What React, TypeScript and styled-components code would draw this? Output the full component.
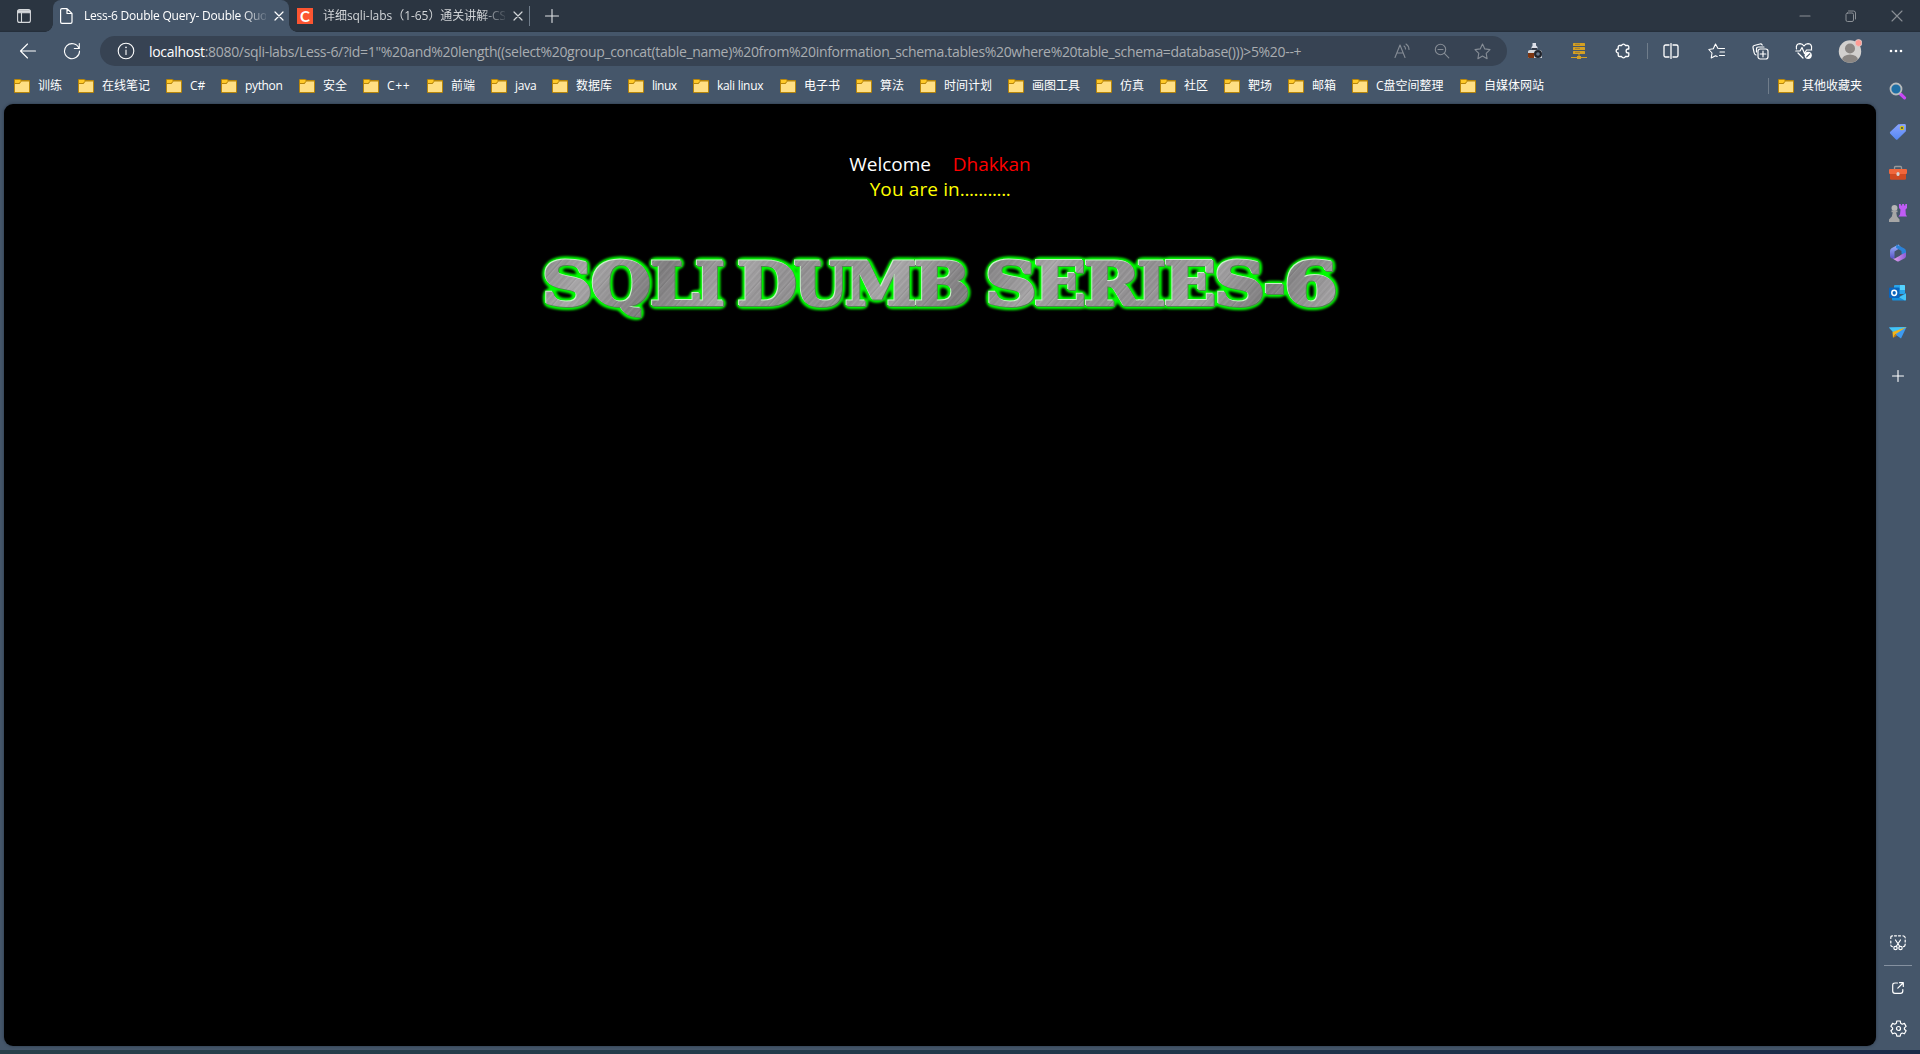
import React from "react";
import styled, { createGlobalStyle } from "styled-components";

const latin = `"Open Sans", "Noto Sans CJK SC", sans-serif`;

const Global = createGlobalStyle`
  * { box-sizing: border-box; }
  html, body { margin: 0; padding: 0; background: #45566a; overflow: hidden; }
  body { font-family: ${latin}; }
  svg { display: block; flex: none; }
`;

const Window = styled.div`
  width: 1920px;
  height: 1054px;
  display: flex;
  flex-direction: column;
  background: #45566a;
`;

const TabBar = styled.header`
  display: flex;
  align-items: center;
  height: 32px;
  flex: none;
  background: linear-gradient(#2b3541 0, #2b3541 30px, #232d39 32px);
`;

const Slot = styled.div<{ $w: number }>`
  width: ${(p) => p.$w}px;
  height: 100%;
  flex: none;
  display: flex;
  align-items: center;
  justify-content: center;
`;

const Tab = styled.div<{ $active?: boolean; $w: number }>`
  position: relative;
  width: ${(p) => p.$w}px;
  height: 32px;
  flex: none;
  display: flex;
  align-items: center;
  padding-left: ${(p) => (p.$active ? 5 : 8)}px;
  background: ${(p) => (p.$active ? "#45566a" : "transparent")};
  border-radius: 8px 8px 0 0;
  color: ${(p) => (p.$active ? "#ffffff" : "#d2d5d8")};
  &::before, &::after {
    content: "";
    display: ${(p) => (p.$active ? "block" : "none")};
    position: absolute;
    bottom: 0;
    width: 8px;
    height: 8px;
  }
  &::before { left: -8px; background: radial-gradient(circle at 0 0, transparent 7.5px, #45566a 8px); }
  &::after { right: -8px; background: radial-gradient(circle at 100% 0, transparent 7.5px, #45566a 8px); }
`;

const TabTitle = styled.div<{ $w: number; $ls: number }>`
  width: ${(p) => p.$w}px;
  margin-left: 10px;
  font-size: 12px;
  line-height: 18px;
  letter-spacing: ${(p) => p.$ls}px;
  white-space: nowrap;
  overflow: hidden;
  mask-image: linear-gradient(90deg, #000 calc(100% - 24px), transparent 102%);
`;

const Favicon = styled.div`
  width: 16px;
  height: 16px;
  flex: none;
  background: #fc5531;
  color: #fff;
  font: 700 15px/16px Lato, sans-serif;
  text-align: center;
`;

const CloseSlot = styled.div`
  width: 16px;
  margin-left: 5px;
  display: flex;
  justify-content: center;
`;

const Rule = styled.div<{ $h: number; $ml?: number }>`
  width: 1px;
  height: ${(p) => p.$h}px;
  margin-left: ${(p) => p.$ml ?? 0}px;
  flex: none;
  background: #707d8b;
`;

const Spacer = styled.div`
  flex: 1;
`;

const Toolbar = styled.div`
  display: flex;
  align-items: center;
  height: 38px;
  flex: none;
  padding-left: 6px;
`;

const Address = styled.div`
  width: 1407px;
  height: 30px;
  margin: 0 6px;
  display: flex;
  align-items: center;
  flex: none;
  border-radius: 15px;
  background: #374353;
  padding: 0 5px 0 6px;
`;

const Url = styled.div`
  margin-left: 3px;
  padding-top: 1px;
  font-size: 14px;
  line-height: 20px;
  letter-spacing: -0.32px;
  color: #a9adb1;
  white-space: nowrap;
  flex: 1;
`;

const Host = styled.span`
  color: #ffffff;
`;

const Body = styled.div`
  display: flex;
  height: 980px;
  flex: none;
`;

const Main = styled.div`
  width: 1876px;
  display: flex;
  flex-direction: column;
`;

const Bookmarks = styled.nav`
  display: flex;
  align-items: center;
  height: 34px;
  flex: none;
  padding-left: 14px;
  padding-bottom: 2px;
`;

const Bookmark = styled.div`
  display: flex;
  align-items: center;
  margin-right: 16px;
  &:last-child { margin-right: 14px; }
`;

const BookmarkLabel = styled.span<{ $w: number; $ls: number }>`
  width: ${(p) => p.$w}px;
  margin-left: 8px;
  font-size: 12px;
  line-height: 18px;
  letter-spacing: ${(p) => p.$ls}px;
  color: #ffffff;
  white-space: nowrap;
`;

const Page = styled.main`
  width: 1872px;
  height: 942px;
  margin-left: 4px;
  flex: none;
  display: flex;
  flex-direction: column;
  align-items: center;
  border-radius: 9px;
  background: #000;
  box-shadow: 0 0 3px rgba(20, 28, 40, 0.55);
  padding-top: 48px;
`;

const Line = styled.div<{ $c: string; $ls: number; $gap?: number }>`
  display: flex;
  justify-content: center;
  gap: ${(p) => p.$gap ?? 0}px;
  height: 25px;
  font-size: 19px;
  line-height: 25px;
  letter-spacing: ${(p) => p.$ls}px;
  color: ${(p) => p.$c};
  white-space: nowrap;
`;

const Red = styled.span`
  color: #ff0000;
`;

const Dots = styled.span`
  letter-spacing: -0.4px;
`;

const Banner = styled.div`
  margin-top: 43px;
`;

const Sidebar = styled.aside`
  width: 44px;
  display: flex;
  flex-direction: column;
  align-items: center;
  padding: 1px 0 3px;
`;

const SideSlot = styled.div<{ $h?: number }>`
  width: 44px;
  height: ${(p) => p.$h ?? 40}px;
  flex: none;
  display: flex;
  align-items: center;
  justify-content: center;
`;

const SideRule = styled.div`
  width: 28px;
  height: 1px;
  flex: none;
  background: #8591a0;
`;

const Desktop = styled.div`
  height: 4px;
  background: linear-gradient(90deg, #28404a 0%, #223a4a 45%, #1b2a48 100%);
`;

type IconProps = { s?: number; c?: string; w?: number; children: React.ReactNode };
const Icon = ({ s = 16, c = "#fff", w = 1.1, children }: IconProps) => (
  <svg width={s} height={s} viewBox={`0 0 ${s} ${s}`} fill="none" stroke={c} strokeWidth={w} strokeLinecap="round" strokeLinejoin="round">
    {children}
  </svg>
);

const Close = ({ c = "#fff" }) => (
  <Icon s={10} c={c} w={1.2}><path d="M1 1l8 8M9 1L1 9" /></Icon>
);

const Folder = () => (
  <svg width="16" height="14" viewBox="0 0 16 14">
    <path d="M0 1a1 1 0 0 1 1-1h5l2 1h7a1 1 0 0 1 1 1v11a1 1 0 0 1-1 1H1a1 1 0 0 1-1-1z" fill="#b8860b" />
    <path d="M1 1h5l1 1-2 2H1z" fill="#ffc929" />
    <path d="M1 5h4.500l2-2.500H15V13H1z" fill="#ffdf84" />
  </svg>
);

const marks: [string, number, number][] = [
  ["训练", 24, 0], ["在线笔记", 48, 0], ["C#", 15, -0.1], ["python", 38, -0.35], ["安全", 24, 0],
  ["C++", 24, 0.7], ["前端", 24, 0], ["java", 21, -0.2], ["数据库", 36, 0], ["linux", 25, -0.5],
  ["kali linux", 47, -0.3], ["电子书", 36, 0], ["算法", 24, 0], ["时间计划", 48, 0], ["画图工具", 48, 0],
  ["仿真", 24, 0], ["社区", 24, 0], ["靶场", 24, 0], ["邮箱", 24, 0], ["C盘空间整理", 68, 0], ["自媒体网站", 60, 0],
];

const Mark = ({ label, w, ls }: { label: string; w: number; ls: number }) => (
  <Bookmark>
    <Folder />
    <BookmarkLabel $w={w} $ls={ls}>{label}</BookmarkLabel>
  </Bookmark>
);

/* Left edge and width of every banner glyph, in banner units. */
const glyphs: [string, number, number][] = [
  ["S", 16, 51], ["Q", 65, 60], ["L", 124, 50], ["I", 169, 30],
  ["D", 211, 60], ["U", 268, 54], ["M", 319, 72], ["B", 388, 56],
  ["S", 459, 52], ["E", 508, 52], ["R", 558, 56], ["I", 611, 29],
  ["E", 638, 52], ["S", 688, 51], ["-", 738, 21], ["6", 758, 54],
];

/* Offset and tone of the streaks of the brushed metal. */
const streaks: [number, string][] = [
  [1, "#9f9d9f"], [3, "#8f8d8f"], [6, "#a3a1a3"], [8, "#918f91"], [11, "#9f9d9f"],
  [13, "#8b898b"], [14, "#a5a3a5"], [18, "#8f8d8f"], [20, "#a19fa1"],
];

const BannerArt = () => (
  <svg width="828" height="92" viewBox="0 0 828 92">
    <defs>
      <pattern id="brush" width="23" height="200" patternUnits="userSpaceOnUse" patternTransform="rotate(42)">
        <rect width="23" height="200" fill="#979597" />
        {streaks.map(([x, fill]) => <rect key={x} x={x} width="1.200" height="200" fill={fill} />)}
      </pattern>
      <linearGradient id="sheen" x1="0" y1="0" x2="110" y2="70" gradientUnits="userSpaceOnUse" spreadMethod="reflect">
        <stop offset="0" stopColor="#000" stopOpacity="0.02" />
        <stop offset="0.5" stopColor="#fff" stopOpacity="0.16" />
        <stop offset="1" stopColor="#000" stopOpacity="0.16" />
      </linearGradient>
      <pattern id="metal" width="828" height="92" patternUnits="userSpaceOnUse">
        <rect width="828" height="92" fill="url(#brush)" />
        <rect width="828" height="92" fill="url(#sheen)" />
      </pattern>
      <filter id="neon" x="0" y="0" width="828" height="92" filterUnits="userSpaceOnUse" colorInterpolationFilters="sRGB">
        <feGaussianBlur in="SourceAlpha" stdDeviation="2.400" />
        <feComponentTransfer><feFuncA type="linear" slope="14" intercept="-0.900" /></feComponentTransfer>
        <feGaussianBlur stdDeviation="1.100" result="halo" />
        <feFlood floodColor="#00fc00" /><feComposite in2="halo" operator="in" result="green" />
        <feOffset in="SourceAlpha" dx="-0.700" dy="-0.700" result="up" />
        <feFlood floodColor="#c8f0c8" /><feComposite in2="up" operator="in" result="light" />
        <feOffset in="SourceAlpha" dx="0.500" dy="0.500" result="down" />
        <feFlood floodColor="#4a8a4a" /><feComposite in2="down" operator="in" result="dark" />
        <feMerge>
          <feMergeNode in="green" /><feMergeNode in="dark" /><feMergeNode in="light" /><feMergeNode in="SourceGraphic" />
        </feMerge>
      </filter>
    </defs>
    <text y="59.500" fontFamily="DejaVu Serif, serif" fontWeight="700" fontSize="59" fill="url(#metal)" stroke="url(#metal)" strokeWidth="2" filter="url(#neon)">
      {glyphs.map(([g, x, w], i) => (
        <tspan key={i} x={x} textLength={w} lengthAdjust="spacingAndGlyphs">{g}</tspan>
      ))}
    </text>
  </svg>
);

const TabMenuIcon = () => (
  <Icon s={14} c="#d5d8db"><rect x=".6" y=".6" width="12.800" height="12.800" rx="2" /><path d="M4.500 4v9" /><path d="M1 1.700h12v2H1z" fill="#d5d8db" /></Icon>
);
const FileIcon = () => (
  <Icon s={16} w={1.2}><path d="M4 .6h5L14 5.500V14a1.400 1.400 0 0 1-1.400 1.400H4A1.400 1.400 0 0 1 2.600 14V2A1.400 1.400 0 0 1 4 .6zM9 .8v4.700h4.800" /></Icon>
);
const HostInfo = () => (
  <Icon s={18}><circle cx="9" cy="9" r="7.800" /><path d="M9 8v4.500" /><path d="M9 5.300v.2" strokeWidth="1.600" /></Icon>
);

const Search = () => (
  <svg width="18" height="18" viewBox="0 0 18 18">
    <path d="M11.500 12l4 3.800" stroke="#c748f5" strokeWidth="3.200" strokeLinecap="round" />
    <circle cx="7" cy="7" r="5.500" fill="#1f6fa5" stroke="#b9bcbd" strokeWidth="1.800" />
  </svg>
);
const Tag = () => (
  <svg width="18" height="18" viewBox="0 0 18 18">
    <defs><linearGradient id="tg" x1="0" y1="0" x2="0" y2="1"><stop stopColor="#8aa4ff" /><stop offset="1" stopColor="#5487f3" /></linearGradient></defs>
    <path d="M9.300 1.300L15.500 1q1.300 0 1.400 1.300v6L8.700 16.300q-1 1-2 0L1.300 10.800q-1-1 0-2z" fill="url(#tg)" />
    <circle cx="13" cy="5" r="1.700" fill="#445555" stroke="#d9c417" strokeWidth="1.200" />
  </svg>
);
const Toolbox = () => (
  <svg width="18" height="16" viewBox="0 0 18 16">
    <path d="M5.500 5V2.500q0-1 1-1h5q1 0 1 1V5" fill="none" stroke="#999" strokeWidth="1.300" />
    <rect x="0" y="4" width="18" height="5" rx="1" fill="#f0673c" />
    <path d="M1 9h16v4.500q0 1.300-1.300 1.300H2.300Q1 14.800 1 13.500z" fill="#cf4a22" />
    <rect x="7.500" y="7" width="3" height="4" rx="1.500" fill="#d4d4d4" />
  </svg>
);
const Chess = () => (
  <svg width="18" height="18" viewBox="0 0 18 18">
    <path d="M10 0h1.800v1.500h1.300V0h2v1.500h1.200V0H18v4l-1.500 1.500.3 5 1.200 2H9.500l1.500-2 .5-5L10 4z" fill="#bf5cf5" />
    <circle cx="5.500" cy="4" r="3" fill="#b5b5b5" />
    <path d="M2.500 6.500h6v1.700H7.200l.8 4.300 2.500 3V18H0v-2.500l2.800-3 1-4.300H2.500z" fill="#a6a6a6" />
  </svg>
);
const M365 = () => (
  <svg width="18" height="18" viewBox="0 0 18 18">
    <defs>
      <linearGradient id="ma" x1="0" y1="0" x2="0" y2="1"><stop stopColor="#9fb9ff" /><stop offset="1" stopColor="#5750c4" /></linearGradient>
      <linearGradient id="mc" x1="0" y1="0" x2="1" y2="0"><stop stopColor="#e8a5ee" /><stop offset="1" stopColor="#8d5bd6" /></linearGradient>
    </defs>
    <path d="M9.500.5L2.500 4.300Q1 5.200 1 7v5q0 2 2.500 2.800L5.500 15V7.500L12 3.500z" fill="url(#ma)" />
    <path d="M7.500.5l7.500 3.800q2 1 2 3V12l-4.500-2.500V7L7 3.800z" fill="#2b83d8" />
    <path d="M17 8.500V12q0 1.300-1.300 2.200L10 17.300q-1 .5-2 0l-4-2.500 2-.3 6.500-4z" fill="url(#mc)" />
    <path d="M6.300 7.800L9 6.200l2.800 1.600v3L9 12.500l-2.700-1.600z" fill="#45566a" />
  </svg>
);
const Outlook = () => (
  <svg width="18" height="18" viewBox="0 0 18 18">
    <rect x="5" y="1" width="11" height="9" rx="1" fill="#2aa5ea" />
    <path d="M11 1h4q1 0 1 1v4h-5z" fill="#55d3ff" />
    <path d="M3 10l7 3 7-4v6.500q0 1-1 1H4q-1 0-1-1z" fill="#1490df" />
    <path d="M17 9.500v6q0 1-1 1l-6-3.300z" fill="#45c4f6" />
    <rect x="0" y="3.500" width="10.500" height="10.500" rx="1" fill="#0a64bd" />
    <ellipse cx="5.200" cy="8.800" rx="2.400" ry="2.600" fill="none" stroke="#fff" strokeWidth="1.500" />
  </svg>
);
const Plane = () => (
  <svg width="18" height="14" viewBox="0 0 18 14">
    <path d="M0 1.500L17.500 1 12 12.500 7 9z" fill="#3d9af0" />
    <path d="M0 1.500L17.500 1 4 6z" fill="#43c5f5" />
    <path d="M17.500 1L3.500 6 4 12l2.500-3.800z" fill="#f3b51b" />
    <path d="M4 12l2.200-4 1.800 1.500z" fill="#c47a12" />
  </svg>
);

export default function App() {
  return (
    <>
      <Global />
      <Window>
        <TabBar>
          <Slot $w={48}><TabMenuIcon /></Slot>
          <Slot $w={5} />
          <Tab $active $w={236}>
            <FileIcon />
            <TabTitle $w={182} $ls={-0.24}>Less-6 Double Query- Double Quo</TabTitle>
            <CloseSlot><Close /></CloseSlot>
          </Tab>
          <Tab $w={240}>
            <Favicon>C</Favicon>
            <TabTitle $w={182} $ls={-0.05}>详细sqli-labs（1-65）通关讲解-CS</TabTitle>
            <CloseSlot><Close c="#d2d5d8" /></CloseSlot>
          </Tab>
          <Rule $h={20} />
          <Slot $w={43}><Icon s={14} c="#e1e3e6"><path d="M7 .5v13M.5 7h13" /></Icon></Slot>
          <Spacer />
          <Slot $w={46}><Icon s={12} c="#8b9096"><path d="M1 6h10" /></Icon></Slot>
          <Slot $w={46}><Icon s={12} c="#8b9096" w={1}><rect x="1" y="3" width="7.500" height="8.500" rx="1.500" /><path d="M3.500 1h5q2 0 2 2v6" /></Icon></Slot>
          <Slot $w={46}><Icon s={12} c="#8b9096"><path d="M1 1l10 10M11 1L1 11" /></Icon></Slot>
        </TabBar>

        <Toolbar>
          <Slot $w={44}><Icon s={18}><path d="M16.500 9H1.500M8.500 2L1.500 9l7 7" /></Icon></Slot>
          <Slot $w={44}><Icon s={18}><path d="M15.900 6.200A7.500 7.500 0 1 0 16.500 9M16.300 1.500v5h-5" /></Icon></Slot>
          <Address>
            <Slot $w={40}><HostInfo /></Slot>
            <Url>
              <Host>localhost</Host>:8080/sqli-labs/Less-6/?id=1"%20and%20length((select%20group_concat(table_name)%20from%20information_schema.tables%20where%20table_schema=database()))&gt;5%20--+
            </Url>
            <Slot $w={40}><Icon s={16} c="#858c95"><path d="M1 14.500L6 2l5 12.500M2.800 10h6.400M10 3q1.500 1 1.500 3M12 1q3 2 3 5.500" /></Icon></Slot>
            <Slot $w={40}><Icon s={16} c="#858c95"><circle cx="6.500" cy="6.500" r="5.200" /><path d="M10.400 10.400l4.400 4.400M4 6.500h5" /></Icon></Slot>
            <Slot $w={40}><Icon s={17} c="#858c95"><path d="M8.500 1l2.300 4.900 5.200.7-3.800 3.700.9 5.400-4.600-2.600-4.600 2.600.9-5.400L1 6.600l5.200-.7z" /></Icon></Slot>
          </Address>
          <Slot $w={44}>
            <svg width="16" height="16" viewBox="0 0 16 16">
              <path d="M5.500 0h3.500v2.500l1.500 1.500v1.500H4.500V4l1-1z" fill="#dcdfe8" />
              <path d="M1 8.500q0-1.500 2-1.500h9q3 0 3 2.500V15H1z" fill="#d4d7dc" />
              <path d="M1 10h6v5H2q-1 0-1-1z" fill="#7c3511" />
              <circle cx="11" cy="11" r="4" fill="#20242c" /><circle cx="11" cy="11" r="1.800" fill="#68798e" />
              <path d="M5 5h5v1.800H5z" fill="#333947" />
            </svg>
          </Slot>
          <Slot $w={44}>
            <svg width="16" height="16" viewBox="0 0 16 16" fill="#d5a022">
              <rect x="2" y="0" width="12" height="3" rx=".5" /><rect x="2" y="4" width="12" height="3" rx=".5" /><rect x="2" y="8" width="12" height="3" rx=".5" />
              <path d="M7.500 11h1v2H10v1h6v1h-6v1H6v-1H0v-1h6v-1h1.500z" />
              <path d="M4 1.300h5M4 5.300h5M4 9.300h5" stroke="#8d7038" strokeWidth=".8" />
            </svg>
          </Slot>
          <Slot $w={44}>
            <Icon s={16} w={1.3}>
              <path d="M4.500 2.500H6.600A2 1.900 0 0 1 10.400 2.500H12.500a1.300 1.300 0 0 1 1.300 1.300V6H13a1.900 1.900 0 0 0 0 3.800h.8V12.200a1.300 1.300 0 0 1-1.300 1.300H10.400A2 1.900 0 0 1 6.600 13.500H4.500a1.300 1.300 0 0 1-1.300-1.300V10A2 2 0 0 1 3.200 6V3.800a1.300 1.300 0 0 1 1.300-1.300z" />
            </Icon>
          </Slot>
          <Rule $h={16} $ml={2} />
          <Slot $w={46}><Icon s={16} w={1.3}><path d="M6 2H2.500A1.500 1.500 0 0 0 1 3.500v9A1.500 1.500 0 0 0 2.500 14H6M10 2h3.500A1.500 1.500 0 0 1 15 3.500v9a1.500 1.500 0 0 1-1.500 1.500H10M8 .6v14.800" /></Icon></Slot>
          <Slot $w={44}><Icon s={17}><path d="M11 5.500h5.500M12 9h4.500M11.500 12.500h5M10 5.500L7.500 1 5.300 5.700l-4.500.8L4 10l-.8 5L7.500 12.700l1.700.8" /></Icon></Slot>
          <Slot $w={44}><Icon s={17} w={1.2}><rect x="6" y="6" width="10" height="10" rx="2.200" /><path d="M11 8.200v5.600M8.200 11h5.600M4 12q-1.500-.5-1.800-2L1 4.500Q.7 3 2.200 2.500L8 1q1.500-.3 2.200 1M4.500 9V6q0-2 2-2H12" /></Icon></Slot>
          <Slot $w={44}>
            <Icon s={18} w={1.2}>
              <path d="M1.500 7Q.5 2 5 1.700 7.500 1.700 9 4q1.500-2.300 4-2.300Q17.300 2 16.500 7M.8 9h4.200l2-3.500 2.500 6L11.500 8h5.200M3 11l5 5" />
              <circle cx="13.200" cy="13.300" r="3.600" fill="#fff" stroke="none" /><path d="M11.700 14.800l3-3" stroke="#45566a" />
            </Icon>
          </Slot>
          <Slot $w={48}>
            <svg width="24" height="24" viewBox="0 0 24 24">
              <defs><clipPath id="av"><circle cx="12" cy="12.500" r="11.200" /></clipPath></defs>
              <g clipPath="url(#av)"><rect width="24" height="24" fill="#d2d0ce" /><circle cx="12" cy="9.500" r="5" fill="#8a8683" /><ellipse cx="12" cy="21" rx="8" ry="5.500" fill="#8a8683" /></g>
              <circle cx="20.500" cy="4" r="3.400" fill="#ff9b93" stroke="#d9cfce" strokeWidth=".8" />
            </svg>
          </Slot>
          <Slot $w={44}><svg width="14" height="4" viewBox="0 0 14 4" fill="#fff"><circle cx="2" cy="2" r="1.300" /><circle cx="7" cy="2" r="1.300" /><circle cx="12" cy="2" r="1.300" /></svg></Slot>
        </Toolbar>

        <Body>
          <Main>
            <Bookmarks>
              {marks.map(([label, w, ls]) => <Mark key={label} label={label} w={w} ls={ls} />)}
              <Spacer />
              <Rule $h={16} />
              <Slot $w={9} />
              <Mark label="其他收藏夹" w={60} ls={0} />
            </Bookmarks>
            <Page>
              <Line $c="#fff" $ls={-0.05} $gap={22}><span>Welcome</span><Red>Dhakkan</Red></Line>
              <Line $c="#ffff00" $ls={0.12}><span>You are in<Dots>...........</Dots></span></Line>
              <Banner><BannerArt /></Banner>
            </Page>
          </Main>
          <Sidebar>
            <SideSlot><Search /></SideSlot>
            <SideSlot $h={42}><Tag /></SideSlot>
            <SideSlot><Toolbox /></SideSlot>
            <SideSlot><Chess /></SideSlot>
            <SideSlot><M365 /></SideSlot>
            <SideSlot><Outlook /></SideSlot>
            <SideSlot><Plane /></SideSlot>
            <SideSlot $h={46}><Icon s={12}><path d="M6 .5v11M.5 6h11" /></Icon></SideSlot>
            <Spacer />
            <SideSlot $h={44}>
              <Icon s={16} w={1.2}><path d="M.8 3.500V2.500q0-1.700 1.700-1.700M4.500.8h2M8.500.8h2M13 .8q2 0 2.200 2M15.200 5v2M.8 6v2M.8 10q0 1.500 1.500 1.700M15.200 9q0 2.500-1.800 2.700M5.500 5l4.300 6.500M10.500 5l-4.300 6.500" /><circle cx="5.500" cy="13" r="1.700" /><circle cx="10.500" cy="13" r="1.700" /></Icon>
            </SideSlot>
            <SideRule />
            <SideSlot $h={44}><Icon s={12} w={1.2}><path d="M5.500 1H3Q.7 1 .7 3.200V9q0 2.300 2.300 2.300h5.500q2.300 0 2.300-2.300V7.500M7.500.7h3.800v3.800M11 1L5.800 6.200" /></Icon></SideSlot>
            <SideSlot $h={37}>
              <Icon s={17} w={1.2}><path d="M6.800 1h3.400l.5 2.300 1.500.9 2.200-.8 1.700 3-1.700 1.500v1.400l1.700 1.500-1.700 3-2.200-.8-1.500.9-.5 2.200H6.800l-.5-2.200-1.500-.9-2.200.8-1.700-3 1.700-1.500V7.900L.9 6.400l1.700-3 2.200.8 1.500-.9z" /><circle cx="8.500" cy="8.500" r="2" /></Icon>
            </SideSlot>
          </Sidebar>
        </Body>
        <Desktop />
      </Window>
    </>
  );
}
